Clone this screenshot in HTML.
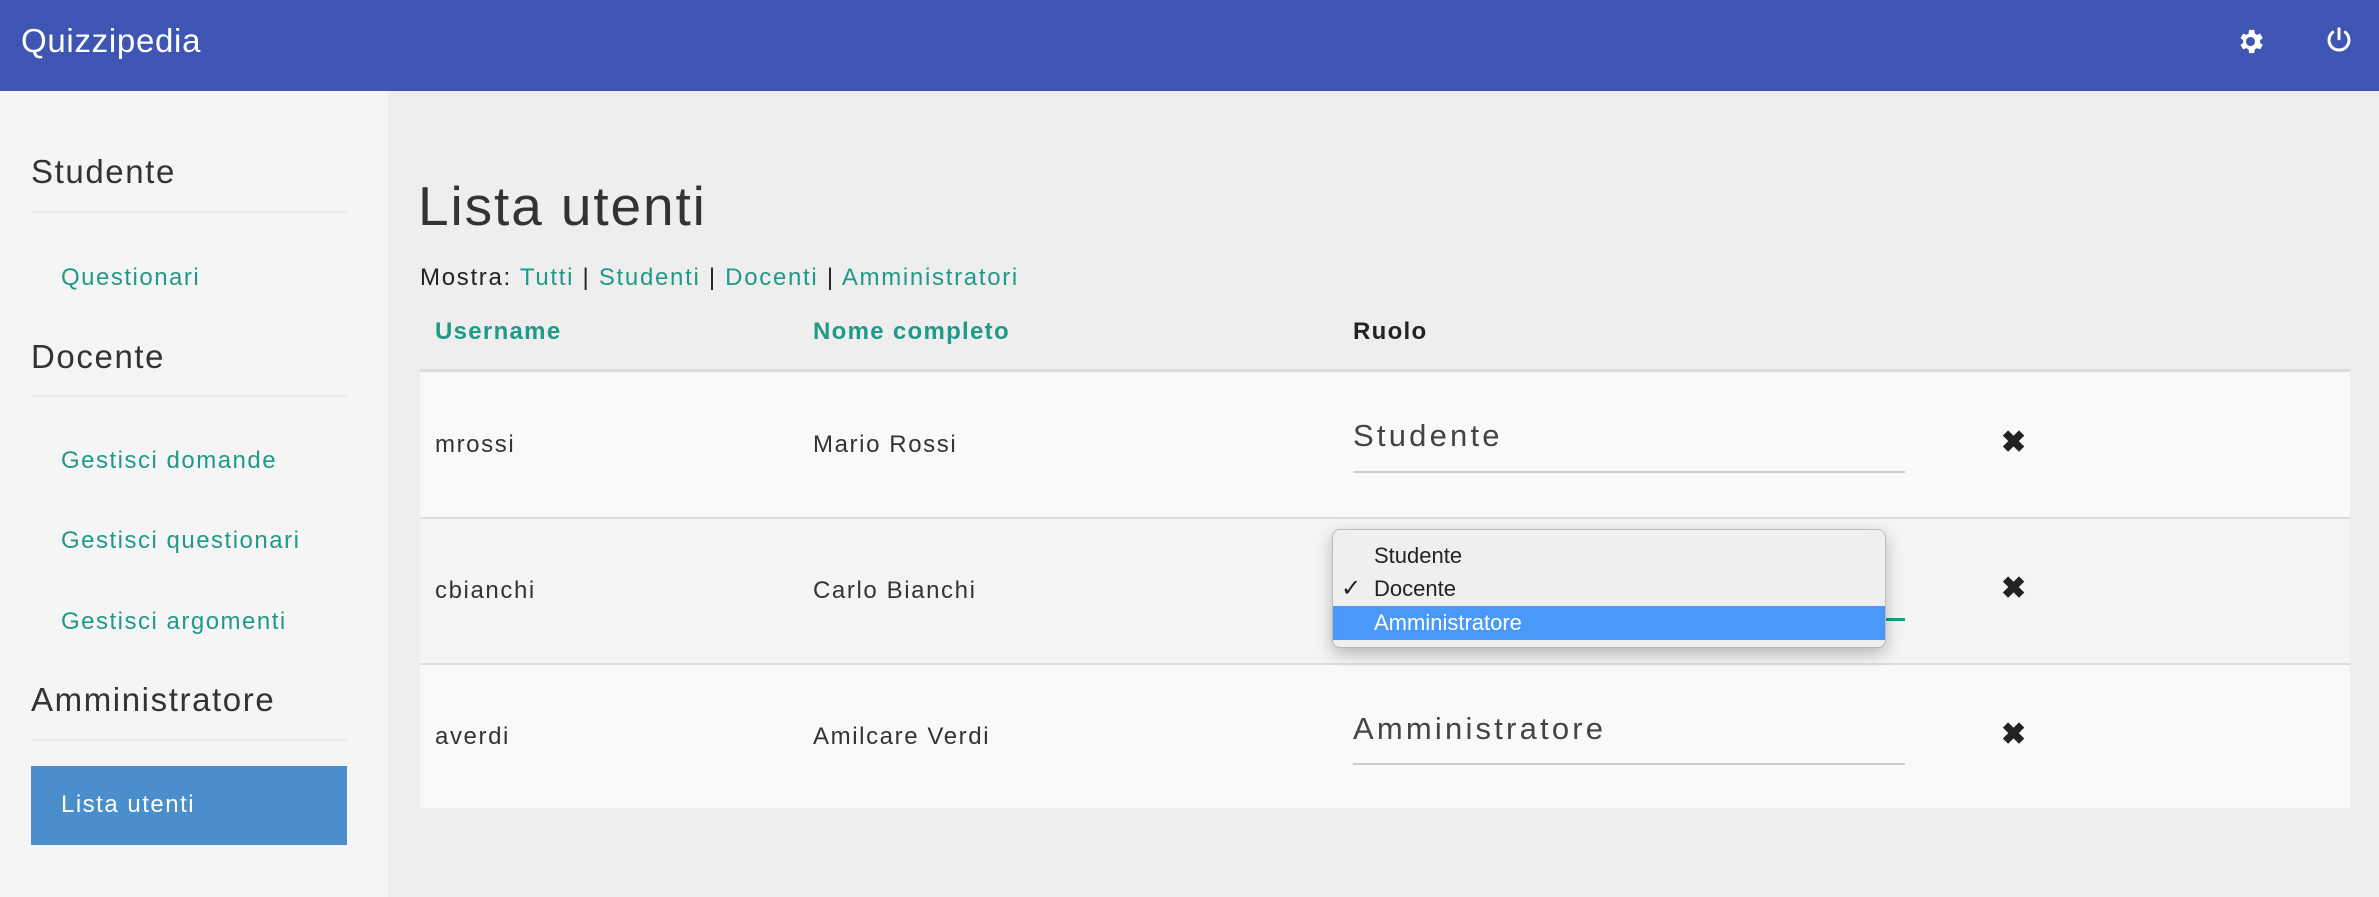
<!DOCTYPE html>
<html><head><meta charset="utf-8"><style>
*{margin:0;padding:0;box-sizing:border-box}
body{width:2379px;height:897px;overflow:hidden;background:#eeeeee;font-family:"Liberation Sans",sans-serif;position:relative;color:#222}
.a{position:absolute;white-space:nowrap}
.hdr{left:0;top:0;width:2379px;height:91px;background:#3f55b3}
.side{left:0;top:91px;width:388px;height:806px;background:#f5f5f5}
.h{font-size:33px;color:#333;left:31px;letter-spacing:1.6px}
.hr{left:31px;width:316px;height:2px;background:#eaeaea}
.ln{font-size:24px;color:#1f9a87;left:61px;letter-spacing:1.5px}
.teal{color:#1f9a87}
.row{left:420px;width:1930px}
.c{font-size:24px;color:#333;letter-spacing:1.6px}
.sel{font-size:31px;color:#444;left:1353px;letter-spacing:3.2px}
.ul{left:1353px;width:552px;height:2px;background:#ccc}
.x{left:2001px;font-size:30px;font-weight:bold;color:#222}
.th{font-size:24px;font-weight:bold;letter-spacing:1.3px}
</style></head><body>
<div class="a hdr"></div>
<div class="a" style="left:21px;top:22px;font-size:33px;color:#fff;letter-spacing:0.7px">Quizzipedia</div>
<svg class="a" style="left:2235px;top:26px" width="31" height="31" viewBox="0 0 24 24"><path fill="#fff" d="M19.4 13a7.5 7.5 0 0 0 0-2l2.1-1.6-2-3.5-2.5 1a7.3 7.3 0 0 0-1.7-1L14.9 3h-4l-.4 2.9a7.3 7.3 0 0 0-1.7 1l-2.5-1-2 3.5L6.4 11a7.5 7.5 0 0 0 0 2l-2.1 1.6 2 3.5 2.5-1a7.3 7.3 0 0 0 1.7 1l.4 2.9h4l.4-2.9a7.3 7.3 0 0 0 1.7-1l2.5 1 2-3.5zM12 15.5a3.5 3.5 0 1 1 0-7 3.5 3.5 0 0 1 0 7z"/></svg>
<svg class="a" style="left:2324px;top:25px" width="30" height="30" viewBox="0 0 24 24"><path fill="none" stroke="#fff" stroke-width="2.4" stroke-linecap="round" d="M12 3v8M7 5.8a8 8 0 1 0 10 0"/></svg>
<div class="a side"></div>
<div class="a h" style="top:153px">Studente</div>
<div class="a hr" style="top:211px"></div>
<div class="a ln" style="top:264px">Questionari</div>
<div class="a h" style="top:338px">Docente</div>
<div class="a hr" style="top:395px"></div>
<div class="a ln" style="top:447px">Gestisci domande</div>
<div class="a ln" style="top:527px">Gestisci questionari</div>
<div class="a ln" style="top:608px">Gestisci argomenti</div>
<div class="a h" style="top:681px">Amministratore</div>
<div class="a hr" style="top:739px"></div>
<div class="a" style="left:31px;top:766px;width:316px;height:79px;background:#4a8ecb"></div>
<div class="a" style="left:61px;top:791px;font-size:24px;color:#fff;letter-spacing:1.5px">Lista utenti</div>
<div class="a" style="left:418px;top:174px;font-size:55px;color:#333;letter-spacing:1.9px">Lista utenti</div>
<div class="a" style="left:420px;top:264px;font-size:24px;color:#222;letter-spacing:1.7px">Mostra: <span class="teal">Tutti</span> | <span class="teal">Studenti</span> | <span class="teal">Docenti</span> | <span class="teal">Amministratori</span></div>
<div class="a th" style="left:435px;top:318px;color:#1f9a87">Username</div>
<div class="a th" style="left:813px;top:318px;color:#1f9a87">Nome completo</div>
<div class="a th" style="left:1353px;top:318px;color:#222">Ruolo</div>
<div class="a row" style="top:369px;height:3px;background:#dcdcdc"></div>
<div class="a row" style="top:372px;height:145px;background:#f9f9f9"></div>
<div class="a row" style="top:517px;height:2px;background:#ddd"></div>
<div class="a row" style="top:519px;height:144px;background:#f4f4f4"></div>
<div class="a row" style="top:663px;height:2px;background:#ddd"></div>
<div class="a row" style="top:665px;height:143px;background:#f9f9f9"></div>
<div class="a c" style="left:435px;top:431px">mrossi</div>
<div class="a c" style="left:813px;top:431px">Mario Rossi</div>
<div class="a sel" style="top:418px">Studente</div>
<div class="a ul" style="top:471px"></div>
<div class="a x" style="top:425px">✖</div>
<div class="a c" style="left:435px;top:577px">cbianchi</div>
<div class="a c" style="left:813px;top:577px">Carlo Bianchi</div>
<div class="a" style="left:1353px;top:618px;width:552px;height:3px;background:#1f9a87"></div>
<div class="a x" style="top:571px">✖</div>
<div class="a c" style="left:435px;top:723px">averdi</div>
<div class="a c" style="left:813px;top:723px">Amilcare Verdi</div>
<div class="a sel" style="top:711px">Amministratore</div>
<div class="a ul" style="top:763px"></div>
<div class="a x" style="top:717px">✖</div>
<div class="a" style="left:1332px;top:529px;width:554px;height:119px;background:#efefef;border:1px solid #bbb;border-radius:8px;box-shadow:0 6px 16px rgba(0,0,0,.25);overflow:hidden">
<div class="a" style="left:41px;top:13px;font-size:22px;color:#222">Studente</div>
<div class="a" style="left:8px;top:44px;font-size:24px;color:#222">✓</div>
<div class="a" style="left:41px;top:46px;font-size:22px;color:#222">Docente</div>
<div class="a" style="left:0;top:76px;width:554px;height:34px;background:#4a98f7"></div>
<div class="a" style="left:41px;top:80px;font-size:22px;color:#fff">Amministratore</div>
</div>
</body></html>
